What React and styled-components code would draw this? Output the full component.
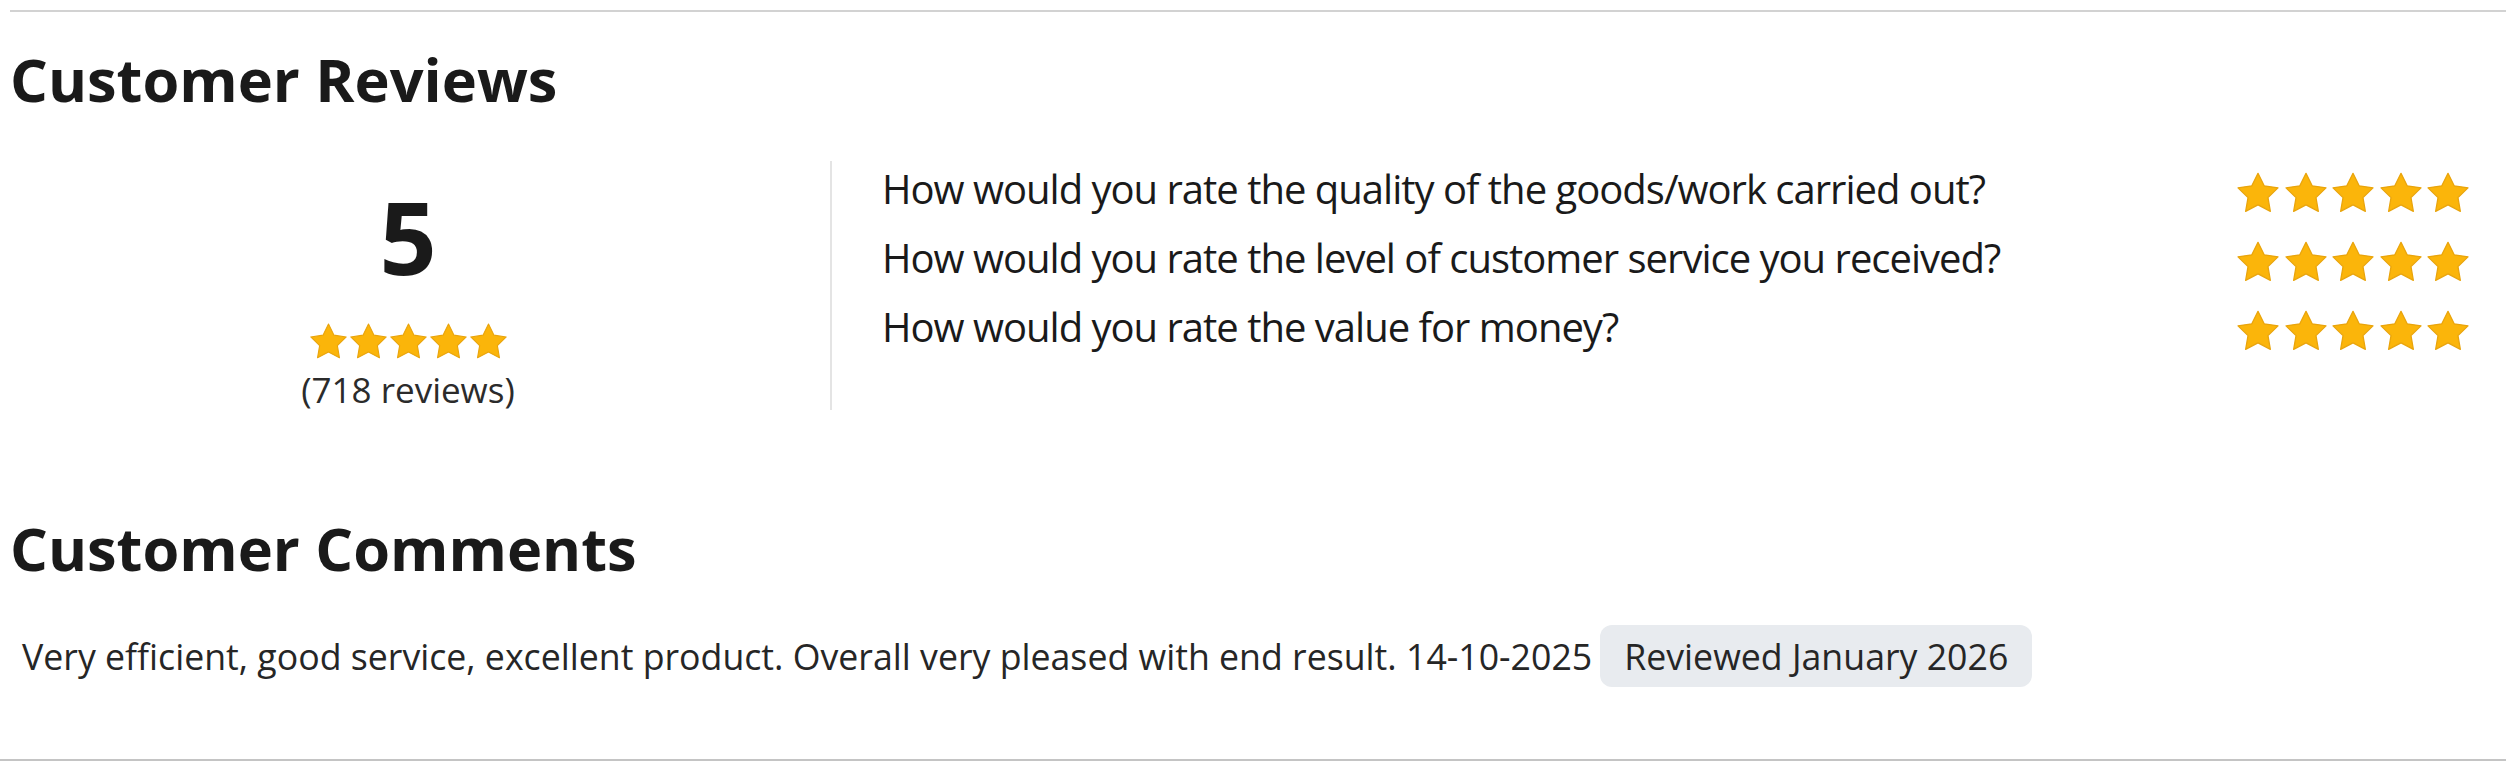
import React from "react";
import styled, { createGlobalStyle } from "styled-components";

const GlobalStyle = createGlobalStyle`
  html, body {
    margin: 0;
    padding: 0;
    background: #ffffff;
  }
  body {
    font-family: "Open Sans", "Noto Sans", sans-serif;
    color: #1c1c1c;
  }
`;

//Page wrapper and the grey rules top and bottom
const Page = styled.div`
  width: 2506px;
  padding-top: 10px;
`;

const Rule = styled.hr`
  margin: 0 0 0 ${(p) => p.$inset || 0}px;
  border: 0;
  border-top: 2px solid ${(p) => p.$color || "#d2d2d2"};
`;

const Heading = styled.h2`
  margin: ${(p) => p.$top}px 0 0 0;
  padding-left: 10px;
  font-size: 59.5px;
  line-height: 72px;
  font-weight: 700;
  color: #1a1a1a;
`;

//Summary + questions
const ReviewRow = styled.div`
  display: flex;
  margin-top: 43px;
  padding: 0 36px 7px 8px;
`;

const Summary = styled.div`
  width: 800px;
  display: flex;
  flex-direction: column;
  align-items: center;
  padding-top: 28px;
`;

const Score = styled.div`
  font-size: 100px;
  line-height: 100px;
  font-weight: 700;
  color: #1a1a1a;
`;

const StarRow = styled.div`
  display: flex;
  gap: ${(p) => p.$gap}px;
  margin-top: ${(p) => p.$top || 0}px;
`;

const Count = styled.div`
  margin-top: 9px;
  font-size: 35px;
  line-height: 40px;
  color: #2b2b2b;
`;

const Divider = styled.div`
  width: 2px;
  margin: 3px 0 0 22px;
  background: #e4e4e4;
`;

const Questions = styled.div`
  flex: 1;
  display: flex;
  flex-direction: column;
  padding-left: 50px;
`;

const QuestionRow = styled.div`
  display: flex;
  align-items: center;
  justify-content: space-between;
  height: 69px;
`;

const QuestionText = styled.span`
  margin-bottom: 7px;
  font-size: 40px;
  line-height: 48px;
  letter-spacing: -1px;
  color: #1a1a1a;
`;

//Comments
const CommentRow = styled.div`
  display: flex;
  align-items: center;
  gap: 8px;
  margin-top: 41px;
  margin-bottom: 72px;
  padding-left: 22px;
`;

const CommentText = styled.span`
  font-size: 35.7px;
  color: #262626;
`;

const Badge = styled.span`
  display: inline-flex;
  align-items: center;
  height: 62px;
  padding: 0 24px;
  border-radius: 12px;
  background: #e8ebef;
  font-size: 35.7px;
  color: #262626;
`;

const Star = ({ size }) => (
  <svg width={size} height={size} viewBox="1.5 1.5 21 21">
    <path
      d="M12 2.6l2.95 5.98 6.6.96-4.78 4.65 1.13 6.57L12 17.66l-5.9 3.1 1.13-6.57-4.78-4.65 6.6-.96z"
      fill="#fbb50a"
      stroke="#e9a40c"
      strokeWidth="0.6"
      strokeLinejoin="round"
    />
  </svg>
);

const Stars = ({ size, gap, top }) => (
  <StarRow $gap={gap} $top={top}>
    {[0, 1, 2, 3, 4].map((i) => (
      <Star key={i} size={size} />
    ))}
  </StarRow>
);

const questions = [
  "How would you rate the quality of the goods/work carried out?",
  "How would you rate the level of customer service you received?",
  "How would you rate the value for money?",
];

export default function App() {
  return (
    <Page>
      <GlobalStyle />
      <Rule $inset={10} />
      <Heading $top={31}>Customer Reviews</Heading>

      <ReviewRow>
        <Summary>
          <Score>5</Score>
          <Stars size={39} gap={1} top={36} />
          <Count>(718 reviews)</Count>
        </Summary>
        <Divider />
        <Questions>
          {questions.map((q) => (
            <QuestionRow key={q}>
              <QuestionText>{q}</QuestionText>
              <Stars size={44} gap={3.5} />
            </QuestionRow>
          ))}
        </Questions>
      </ReviewRow>

      <Heading $top={95}>Customer Comments</Heading>
      <CommentRow>
        <CommentText>
          Very efficient, good service, excellent product. Overall very pleased
          with end result. 14-10-2025
        </CommentText>
        <Badge>Reviewed January 2026</Badge>
      </CommentRow>
      <Rule $color="#c4c4c4" />
    </Page>
  );
}
